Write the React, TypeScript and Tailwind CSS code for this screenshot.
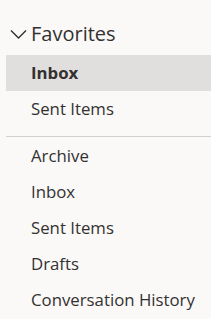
const favorites = [
  { name: "Inbox", selected: true },
  { name: "Sent Items", selected: false },
];

const folders = ["Archive", "Inbox", "Sent Items", "Drafts", "Conversation History"];

export default function App() {
  return (
    <div
      className="w-[211px] h-[319px] bg-[#faf9f8] text-[#323130] overflow-hidden"
      style={{ fontFamily: '"Open Sans", "Noto Sans", sans-serif' }}
    >
      <div className="flex items-center h-[34px] mt-[17px] mb-[4px] pl-[10px]">
        <svg width="17" height="10" viewBox="0 0 17 10" className="mr-[4px]">
          <path d="M1 1.5 L8.5 9 L16 1.5" fill="none" stroke="#323130" strokeWidth="1.4" />
        </svg>
        <span className="text-[20px] leading-none">Favorites</span>
      </div>
      <div className="flex flex-col ml-[6px]">
        {favorites.map((f) => (
          <div
            key={f.name}
            className={
              "flex items-center h-[36px] pl-[25px] text-[16.8px] " +
              (f.selected ? "bg-[#e1dfdd] font-bold" : "")
            }
          >
            {f.name}
          </div>
        ))}
      </div>
      <div className="ml-[6px] mt-[9px] border-t border-[#d2d0ce]" />
      <div className="flex flex-col ml-[6px] mt-[1px]">
        {folders.map((f) => (
          <div key={f} className="flex items-center h-[36px] pl-[25px] text-[16.8px]">
            {f}
          </div>
        ))}
      </div>
    </div>
  );
}
